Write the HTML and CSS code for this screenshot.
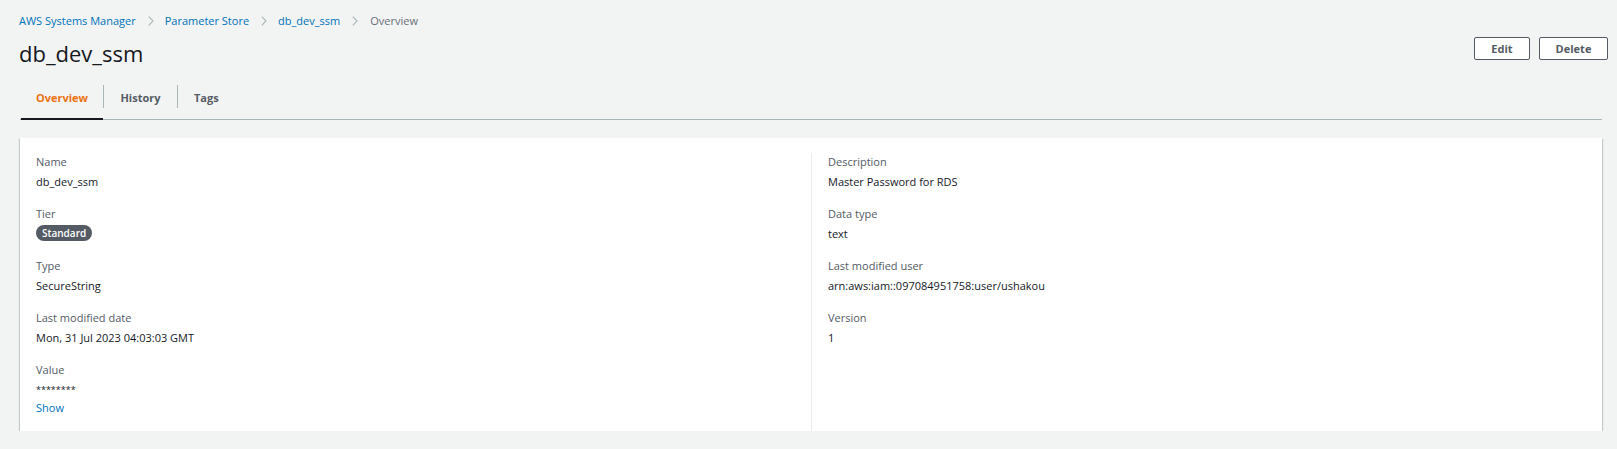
FILE: index.html
```html
<!DOCTYPE html>
<html lang="en">
<head>
<meta charset="utf-8">
<title>db_dev_ssm</title>
<link rel="stylesheet" href="styles.css">
</head>
<body>
<main class="page">
  <nav class="breadcrumbs">
    <a class="crumb-link" href="#">AWS Systems Manager</a>
    <svg class="chev" viewBox="0 0 6 10" width="6" height="10"><path d="M0.8 0.6 L5 5 L0.8 9.4" fill="none" stroke="#aab7b8" stroke-width="1.1"/></svg>
    <a class="crumb-link" href="#">Parameter Store</a>
    <svg class="chev" viewBox="0 0 6 10" width="6" height="10"><path d="M0.8 0.6 L5 5 L0.8 9.4" fill="none" stroke="#aab7b8" stroke-width="1.1"/></svg>
    <a class="crumb-link" href="#">db_dev_ssm</a>
    <svg class="chev" viewBox="0 0 6 10" width="6" height="10"><path d="M0.8 0.6 L5 5 L0.8 9.4" fill="none" stroke="#aab7b8" stroke-width="1.1"/></svg>
    <span class="crumb-current">Overview</span>
  </nav>

  <header class="header">
    <h1 class="title">db_dev_ssm</h1>
    <div class="actions">
      <button class="btn btn-edit">Edit</button>
      <button class="btn btn-delete">Delete</button>
    </div>
  </header>

  <div class="tabs">
    <div class="tab tab-active tab-overview">Overview</div>
    <div class="tab-sep"></div>
    <div class="tab tab-history">History</div>
    <div class="tab-sep"></div>
    <div class="tab tab-tags">Tags</div>
  </div>

  <section class="card">
    <div class="col">
      <div class="field">
        <div class="label">Name</div>
        <div class="value">db_dev_ssm</div>
      </div>
      <div class="field">
        <div class="label">Tier</div>
        <div class="value"><span class="badge">Standard</span></div>
      </div>
      <div class="field">
        <div class="label">Type</div>
        <div class="value">SecureString</div>
      </div>
      <div class="field">
        <div class="label">Last modified date</div>
        <div class="value">Mon, 31 Jul 2023 04:03:03 GMT</div>
      </div>
      <div class="field">
        <div class="label">Value</div>
        <div class="value stars">********</div>
        <div class="show"><a class="show-link" href="#">Show</a></div>
      </div>
    </div>
    <div class="col col-right">
      <div class="field">
        <div class="label">Description</div>
        <div class="value">Master Password for RDS</div>
      </div>
      <div class="field">
        <div class="label">Data type</div>
        <div class="value">text</div>
      </div>
      <div class="field">
        <div class="label">Last modified user</div>
        <div class="value">arn:aws:iam::097084951758:user/ushakou</div>
      </div>
      <div class="field">
        <div class="label">Version</div>
        <div class="value">1</div>
      </div>
    </div>
  </section>
</main>
</body>
</html>
```

FILE: styles.css
```css
* { box-sizing: border-box; }

html, body {
  margin: 0;
  padding: 0;
  background: #f2f3f3;
}

body {
  font-family: "Open Sans", "Noto Sans", "Liberation Sans", sans-serif;
  font-size: 11px;
  color: #16191f;
}

.page {
  padding: 12px 15px 0 20px;
}

/* breadcrumbs */
.breadcrumbs {
  display: flex;
  align-items: center;
  height: 18px;
  line-height: 18px;
  font-size: 11px;
}

.crumb-link {
  color: #0073bb;
  text-decoration: none;
  margin-left: -1px;
}

.chev {
  display: block;
  margin: 0 12px 0 12px;
}

.crumb-current {
  color: #687078;
}

/* header */
.header {
  display: flex;
  justify-content: space-between;
  align-items: flex-start;
  margin-top: 7px;
  margin-right: -6px;
}

.title {
  margin: 0;
  font-size: 22px;
  font-weight: 400;
  line-height: 32px;
  color: #16191f;
  margin-left: -1px;
}

.actions {
  display: flex;
  gap: 9px;
}

.btn {
  height: 23px;
  padding: 0;
  border: 1px solid #545b64;
  border-radius: 2px;
  background: #ffffff;
  color: #545b64;
  font-family: inherit;
  font-size: 11px;
  font-weight: 700;
  line-height: 21px;
  cursor: pointer;
}

.btn-edit { width: 56px; }
.btn-delete { width: 69px; }

/* tabs */
.tabs {
  display: flex;
  margin-top: 9px;
  border-bottom: 1px solid #aab7b8;
  padding-left: 1px;
}

.tab {
  height: 42px;
  line-height: 39px;
  font-size: 11px;
  font-weight: 700;
  color: #545b64;
  border-bottom: 2px solid transparent;
  margin-bottom: -1px;
  white-space: nowrap;
}

.tab-overview { width: 82px; text-align: center; }
.tab-history { width: 73px; text-align: center; }
.tab-tags { padding: 0 16px; }

.tab-active {
  color: #ec7211;
  border-bottom-color: #16191f;
}

.tab-sep {
  width: 1px;
  height: 23px;
  margin-top: 7px;
  background: #aab7b8;
}

/* card */
.card {
  display: grid;
  grid-template-columns: 1fr 1fr;
  margin-top: 18px;
  padding: 15px 16px 16px 16px;
  height: 293px;
  background: #ffffff;
  box-shadow: 0 1px 1px 0 rgba(0, 28, 36, 0.3),
              1px 1px 1px 0 rgba(0, 28, 36, 0.15),
              -1px 1px 1px 0 rgba(0, 28, 36, 0.15);
}

.col-right {
  border-left: 1px solid #eaeded;
  padding-left: 16px;
}

.field {
  margin-bottom: 14px;
}

.label {
  line-height: 18px;
  color: #545b64;
}

.value {
  margin-top: 2px;
  line-height: 18px;
  color: #16191f;
}

.stars {
  font-size: 9px;
  color: #16191f;
}

.show {
  line-height: 18px;
}

.show-link {
  color: #0073bb;
  text-decoration: none;
}

.badge {
  display: inline-block;
  height: 16px;
  line-height: 16px;
  padding: 0 6px;
  border-radius: 8px;
  background: #545b64;
  color: #ffffff;
  font-size: 10px;
  font-weight: 600;
  vertical-align: top;
}
```
